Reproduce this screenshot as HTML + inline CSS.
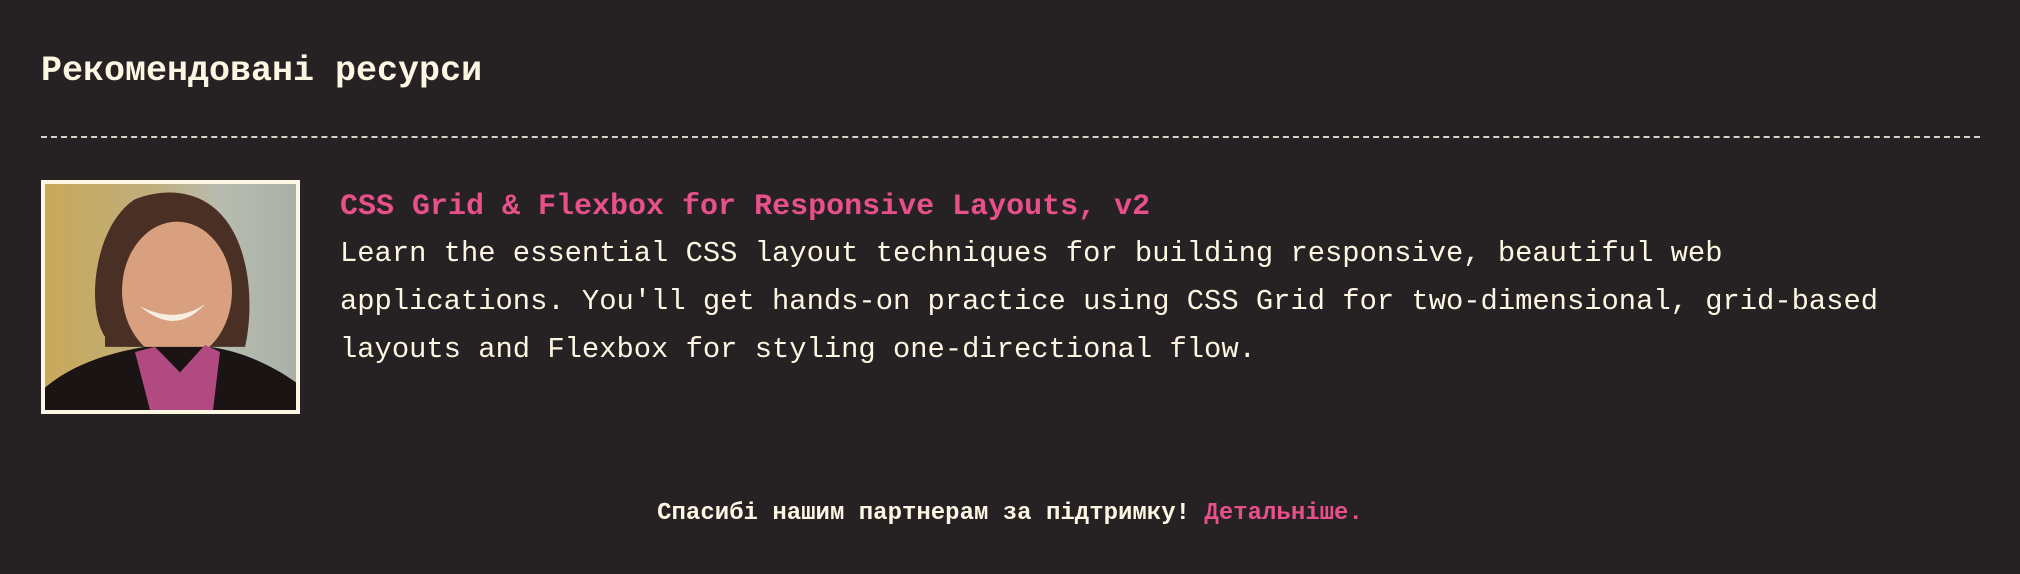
<!DOCTYPE html>
<html><head><meta charset="utf-8"><style>
html,body{margin:0;padding:0;background:#262224;width:2020px;height:574px;overflow:hidden}
body{position:relative;font-family:"Liberation Mono","DejaVu Sans Mono",monospace;color:#fdf6e3}
.h{position:absolute;left:41px;top:48px;font-size:35px;font-weight:bold;line-height:46px;white-space:nowrap}
.line{position:absolute;left:41px;top:136px;width:1939px;border-top:2px dashed #d8d2c8}
.img{position:absolute;left:41px;top:180px;width:251px;height:226px;border:4px solid #fdf6e3}
.t{position:absolute;left:340px;top:187px;font-size:30px;font-weight:bold;color:#e8508a;white-space:nowrap;line-height:40px}
.d{position:absolute;left:340px;top:230px;font-size:28.8px;line-height:48px;white-space:nowrap}
.f{position:absolute;left:0;width:2020px;text-align:center;top:498px;font-size:24px;font-weight:bold;line-height:32px}
.f span{color:#e8508a}
</style></head><body>
<div class="h">Рекомендовані ресурси</div>
<div class="line"></div>
<div class="img"><svg width="251" height="226" viewBox="0 0 251 222" preserveAspectRatio="none">
<defs><linearGradient id="bg" x1="0" x2="1"><stop offset="0" stop-color="#c9a95a"/><stop offset=".45" stop-color="#bfae80"/><stop offset=".7" stop-color="#b8bcb0"/><stop offset="1" stop-color="#a9b0a8"/></linearGradient></defs>
<rect width="251" height="222" fill="url(#bg)"/>
<path d="M60 150 C40 120 50 40 90 15 C130 0 170 10 190 50 C210 90 205 140 200 160 L60 160Z" fill="#4a3024"/>
<ellipse cx="132" cy="105" rx="55" ry="68" fill="#d9a080"/>
<path d="M95 120 Q130 150 160 118 Q130 138 95 120Z" fill="#f4efe0"/>
<path d="M0 222 L0 200 C30 175 70 165 100 160 L165 160 C200 165 230 180 251 195 L251 222Z" fill="#1a1414"/>
<path d="M90 165 L110 160 L135 185 L160 158 L175 165 L168 222 L105 222Z" fill="#b04a80"/>
</svg></div>
<div class="t">CSS Grid &amp; Flexbox for Responsive Layouts, v2</div>
<div class="d">Learn the essential CSS layout techniques for building responsive, beautiful web<br>applications. You'll get hands-on practice using CSS Grid for two-dimensional, grid-based<br>layouts and Flexbox for styling one-directional flow.</div>
<div class="f">Спасибі нашим партнерам за підтримку! <span>Детальніше.</span></div>
</body></html>
